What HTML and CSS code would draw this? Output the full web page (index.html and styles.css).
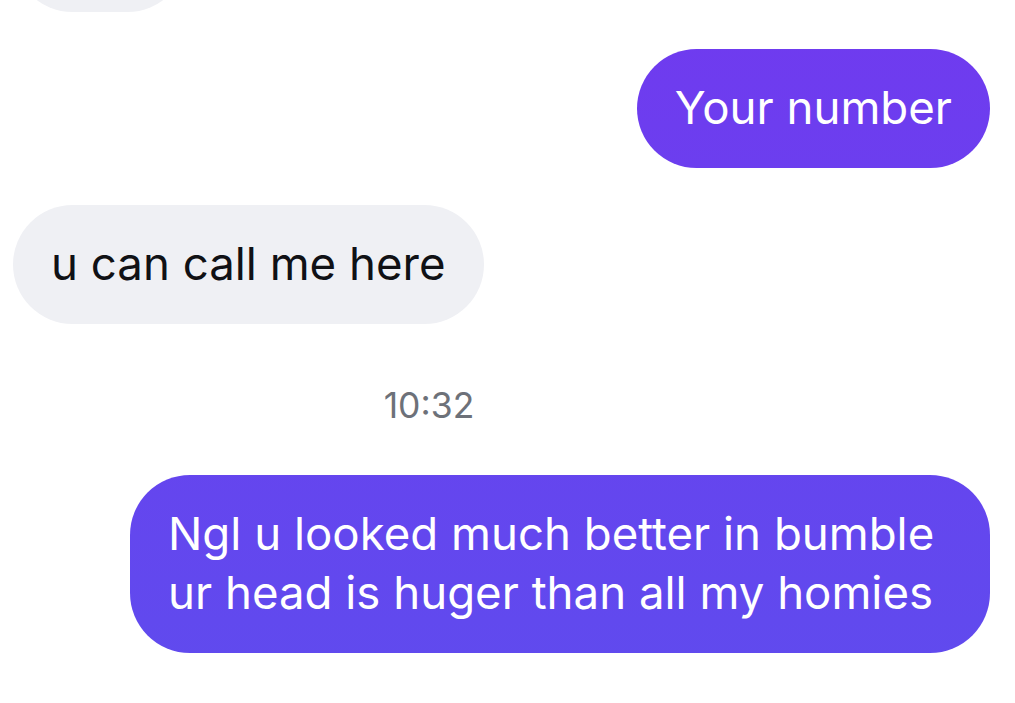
FILE: index.html
```html
<!DOCTYPE html>
<html lang="en">
<head>
<meta charset="utf-8">
<title>Chat</title>
<link rel="stylesheet" href="styles.css">
</head>
<body>
<main class="chat">
  <div class="row in"><div class="bubble stub"></div></div>
  <div class="row out"><div class="bubble">Your number</div></div>
  <div class="row in"><div class="bubble">u can call me here</div></div>
  <div class="time">10:32</div>
  <div class="row out"><div class="bubble">Ngl u looked much better in bumble ur head is huger than all my homies</div></div>
</main>
</body>
</html>
```

FILE: styles.css
```css
html, body {
  margin: 0;
  padding: 0;
  background: #ffffff;
  overflow: hidden;
}

.chat {
  display: flex;
  flex-direction: column;
  gap: 37px;
  margin-top: -107px;
  padding: 0 25px 0 13px;
  font-family: Inter, "Noto Sans", "Liberation Sans", sans-serif;
}

.row {
  display: flex;
}

.row.out {
  justify-content: flex-end;
}

.bubble {
  max-width: 784px;
  padding: 29px 38px 31px;
  border-radius: 60px;
  font-size: 45.6px;
  line-height: 59px;
}

.bubble.stub {
  width: 98px;
  height: 59px;
}

.in .bubble {
  background: #eff0f4;
  color: #101115;
}

.out .bubble {
  color: #ffffff;
  background: linear-gradient(180deg, #703aef 0px, #5f4bee 703px);
  background-attachment: fixed;
}

.time {
  width: 832px;
  text-align: center;
  font-size: 35.5px;
  line-height: 40px;
  color: #6d7179;
  margin: 25px 0 12px;
}
```
